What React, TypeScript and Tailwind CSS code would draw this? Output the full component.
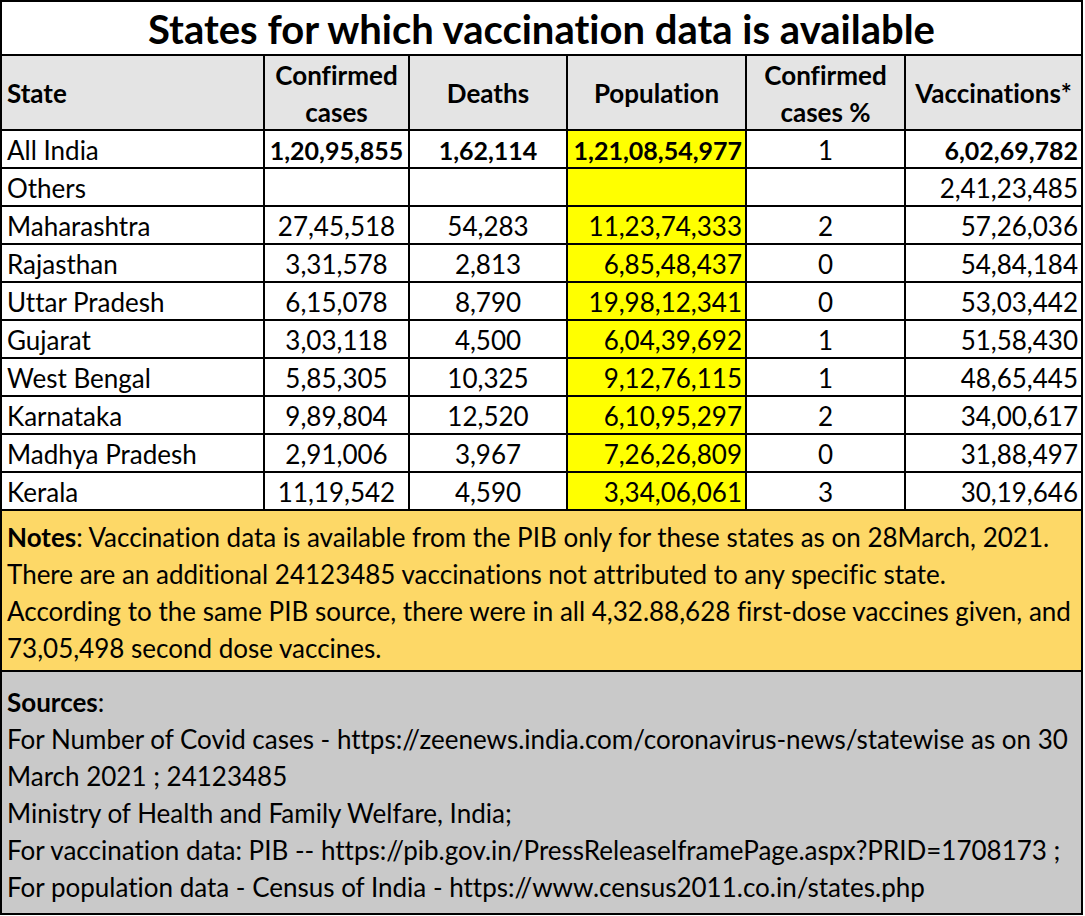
import React from "react";

type Row = {
  state: string;
  cases: string;
  deaths: string;
  pop: string;
  pct: string;
  vacc: string;
  bold?: boolean;
};

const rows: Row[] = [
  { state: "All India", cases: "1,20,95,855", deaths: "1,62,114", pop: "1,21,08,54,977", pct: "1", vacc: "6,02,69,782", bold: true },
  { state: "Others", cases: "", deaths: "", pop: "", pct: "", vacc: "2,41,23,485" },
  { state: "Maharashtra", cases: "27,45,518", deaths: "54,283", pop: "11,23,74,333", pct: "2", vacc: "57,26,036" },
  { state: "Rajasthan", cases: "3,31,578", deaths: "2,813", pop: "6,85,48,437", pct: "0", vacc: "54,84,184" },
  { state: "Uttar Pradesh", cases: "6,15,078", deaths: "8,790", pop: "19,98,12,341", pct: "0", vacc: "53,03,442" },
  { state: "Gujarat", cases: "3,03,118", deaths: "4,500", pop: "6,04,39,692", pct: "1", vacc: "51,58,430" },
  { state: "West Bengal", cases: "5,85,305", deaths: "10,325", pop: "9,12,76,115", pct: "1", vacc: "48,65,445" },
  { state: "Karnataka", cases: "9,89,804", deaths: "12,520", pop: "6,10,95,297", pct: "2", vacc: "34,00,617" },
  { state: "Madhya Pradesh", cases: "2,91,006", deaths: "3,967", pop: "7,26,26,809", pct: "0", vacc: "31,88,497" },
  { state: "Kerala", cases: "11,19,542", deaths: "4,590", pop: "3,34,06,061", pct: "3", vacc: "30,19,646" },
];

export default function App() {
  return (
    <div
      className="w-[1085px] h-[916px] bg-white [font-variant-ligatures:none]"
      style={{ fontFamily: "Lato, 'Liberation Sans', sans-serif" }}
    >
      <div className="w-[1083px] bg-black p-[2px] text-black">
        <div className="grid grid-cols-[261px_143px_156px_177px_157px_175px] gap-[2px] text-[26px] leading-[37px]">
          <div className="col-span-6 bg-white h-[52px] flex items-center justify-center font-bold text-[40px] pt-[2px]">
            States for which vaccination data is available
          </div>

          <div className="bg-[#e4e4e4] h-[73px] flex items-center pl-[5px] pt-[2px] font-bold">State</div>
          <div className="bg-[#e4e4e4] h-[73px] flex flex-col items-center justify-center pt-[2px] font-bold">
            <span>Confirmed</span>
            <span>cases</span>
          </div>
          <div className="bg-[#e4e4e4] h-[73px] flex items-center justify-center pt-[2px] font-bold">Deaths</div>
          <div className="bg-[#e4e4e4] h-[73px] flex items-center justify-center pt-[2px] font-bold">Population</div>
          <div className="bg-[#e4e4e4] h-[73px] flex flex-col items-center justify-center pt-[2px] font-bold">
            <span>Confirmed</span>
            <span>cases %</span>
          </div>
          <div className="bg-[#e4e4e4] h-[73px] flex items-center justify-center pt-[2px] font-bold">Vaccinations*</div>

          {rows.map((r) => (
            <React.Fragment key={r.state}>
              <div className="bg-white h-[36px] flex items-center pl-[5px] pt-[2px]">{r.state}</div>
              <div className={`bg-white h-[36px] flex items-center justify-center pt-[2px] ${r.bold ? "font-bold text-[25px]" : ""}`}>{r.cases}</div>
              <div className={`bg-white h-[36px] flex items-center justify-center pt-[2px] ${r.bold ? "font-bold text-[25px]" : ""}`}>{r.deaths}</div>
              <div className={`bg-[#ffff00] h-[36px] flex items-center justify-end pr-[3px] pt-[2px] ${r.bold ? "font-bold text-[25px]" : ""}`}>{r.pop}</div>
              <div className="bg-white h-[36px] flex items-center justify-center pt-[2px]">{r.pct}</div>
              <div className={`bg-white h-[36px] flex items-center justify-end pr-[3px] pt-[2px] ${r.bold ? "font-bold text-[25px]" : ""}`}>{r.vacc}</div>
            </React.Fragment>
          ))}

          <div className="col-span-6 bg-[#fdd867] h-[159px] pt-[8px] pl-[5px] whitespace-nowrap">
            <div><span className="font-bold">Notes</span>: Vaccination data is available from the PIB only for these states as on 28March, 2021.</div>
            <div>There are an additional 24123485 vaccinations not attributed to any specific state.</div>
            <div>According to the same PIB source, there were in all 4,32.88,628 first-dose vaccines given, and</div>
            <div>73,05,498 second dose vaccines.</div>
          </div>

          <div className="col-span-6 bg-[#c9c9c9] h-[241px] pt-[12px] pl-[5px] whitespace-nowrap">
            <div><span className="font-bold">Sources</span>:</div>
            <div>For Number of Covid cases - https://zeenews.india.com/coronavirus-news/statewise as on 30</div>
            <div>March 2021 ; 24123485</div>
            <div>Ministry of Health and Family Welfare, India;</div>
            <div>For vaccination data: PIB -- https://pib.gov.in/PressReleaseIframePage.aspx?PRID=1708173 ;</div>
            <div>For population data - Census of India - https://www.census2011.co.in/states.php</div>
          </div>
        </div>
      </div>
    </div>
  );
}
